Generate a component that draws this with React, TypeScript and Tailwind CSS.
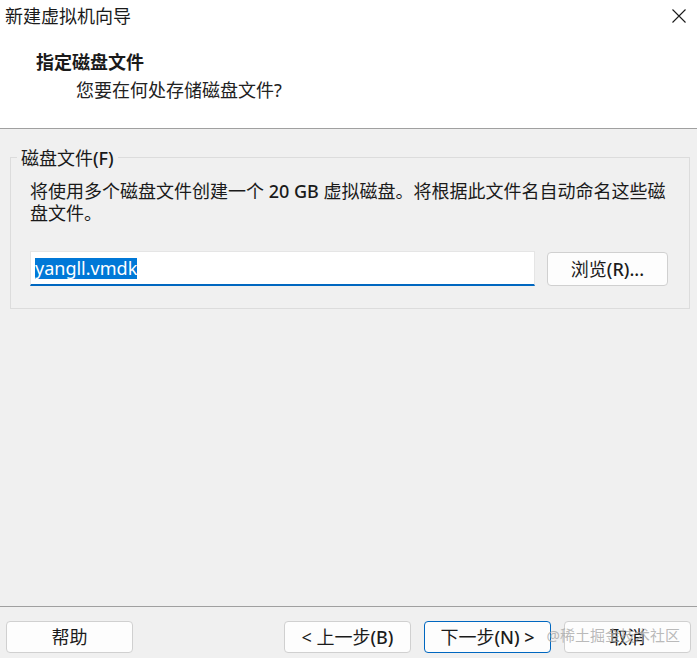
import React from 'react'

const ui = { fontFamily: '"Noto Sans", "Noto Sans CJK SC", sans-serif' }

const Button: React.FC<{ children: React.ReactNode; primary?: boolean; size?: string }> = ({
  children,
  primary,
  size = 'h-[32px] w-[127px]',
}) => (
  <button
    className={`${size} shrink-0 rounded-[4px] border bg-[#fdfdfd] text-[18px] leading-none text-[#1b1b1b] ${
      primary ? 'border-[#0067c0]' : 'border-[#d0d0d0]'
    }`}
  >
    {children}
  </button>
)

export default function App() {
  return (
    <div className="flex h-[658px] w-[697px] flex-col bg-[#f0f0f0] text-[#1a1a1a]" style={ui}>
      {/* Header */}
      <div className="h-[129px] shrink-0 border-b border-[#a0a0a0] bg-white">
        <div className="flex h-[32px] items-center justify-between pl-[5px] pr-[11px]">
          <span className="text-[18px] leading-none">新建虚拟机向导</span>
          <svg width="14" height="14" viewBox="0 0 14 14" className="text-[#1a1a1a]">
            <path d="M0.5 0.5L13.5 13.5M13.5 0.5L0.5 13.5" stroke="currentColor" strokeWidth="1.1" />
          </svg>
        </div>
        <div className="mt-[16px] pl-[36px] text-[18px] font-bold leading-[28px]">指定磁盘文件</div>
        <div className="pl-[76px] text-[18px] leading-[28px] text-[#222]">您要在何处存储磁盘文件?</div>
      </div>

      {/* Body */}
      <div className="flex-1">
        <div className="relative ml-[10px] mr-[7px] mt-[28px] border border-[#dcdcdc] pb-[22px] pl-[19px] pr-[21px] pt-[22px]">
          <span className="absolute -top-[12px] left-[6px] bg-[#f0f0f0] px-[4px] text-[18px] leading-[24px]">
            磁盘文件<span className="font-medium">(F)</span>
          </span>
          <p className="text-[18px] leading-[22px]">
            <span className="whitespace-nowrap">
              将使用多个磁盘文件创建一个 <span className="font-medium">20 GB</span> 虚拟磁盘。将根据此文件名自动命名这些磁
            </span>
            <br />
            盘文件。
          </p>
          <div className="mt-[27px] flex items-center gap-[12px]">
            <div className="flex h-[35px] w-[505px] shrink-0 items-center border border-b-2 border-[#e5e5e5] border-b-[#0067c0] bg-white pl-[4px]">
              <span className="bg-[#0078d7] text-[18px] leading-[21px] text-white">yangll.vmdk</span>
            </div>
            <Button size="h-[34px] w-[121px]">
              浏览<span className="font-medium">(R)...</span>
            </Button>
          </div>
        </div>
      </div>

      {/* Footer */}
      <div className="relative flex h-[52px] shrink-0 items-start border-t border-[#a0a0a0] px-[6px] pt-[14px]">
        <Button>帮助</Button>
        <div className="ml-auto flex gap-[13px]">
          <Button>
            &lt; 上一步<span className="font-medium">(B)</span>
          </Button>
          <Button primary>
            下一步<span className="font-medium">(N) &gt;</span>
          </Button>
          <Button>取消</Button>
        </div>
        <span className="pointer-events-none absolute right-[17px] top-[17px] text-[15px] leading-[22px] text-[#a8a8a8]/80">
          @稀土掘金技术社区
        </span>
      </div>
    </div>
  )
}
